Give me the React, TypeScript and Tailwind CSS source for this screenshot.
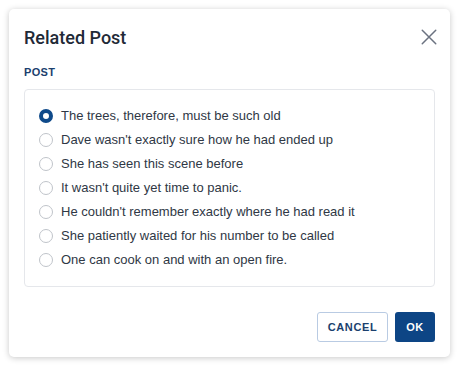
import { useState } from 'react'

const posts = [
  'The trees, therefore, must be such old',
  "Dave wasn't exactly sure how he had ended up",
  'She has seen this scene before',
  "It wasn't quite yet time to panic.",
  "He couldn't remember exactly where he had read it",
  'She patiently waited for his number to be called',
  'One can cook on and with an open fire.',
]

export default function App() {
  const [selected, setSelected] = useState(0)

  return (
    <div className="p-[9px] bg-white" style={{ fontFamily: '"Liberation Sans", Arial, sans-serif' }}>
      <div className="w-[441px] h-[348px] bg-white rounded-[5px] shadow-[0_1px_6px_rgba(0,0,0,0.22)] px-[15px] pt-[17px] pb-[15px] flex flex-col">
        <div className="flex items-center justify-between h-[22px]">
          <h1 className="text-[18px] font-medium text-[#1f2a37]" style={{ fontFamily: 'Roboto, sans-serif' }}>Related Post</h1>
          <button className="w-[18px] h-[18px] text-[#6b7280] mr-[-3px]">
            <svg viewBox="0 0 16 16" width="18" height="18" fill="none" stroke="currentColor" strokeWidth="1.3" strokeLinecap="round">
              <path d="M2 2L14 14M14 2L2 14" />
            </svg>
          </button>
        </div>

        <div className="mt-[17px] text-[11px] font-bold text-[#1b3f6e] tracking-[0.3px] leading-[14px]">POST</div>

        <div className="mt-[10px] border border-[#e5e7eb] rounded-[4px] py-[14px] pl-[14px]">
          {posts.map((p, i) => (
            <label key={p} className="flex items-center h-[24px] cursor-pointer" onClick={() => setSelected(i)}>
              <span
                className={`w-[14px] h-[14px] rounded-full shrink-0 ${selected === i ? 'border-[4px] border-[#0f4a8a]' : 'border border-[#c0c4ca]'}`}
              />
              <span className="ml-[8px] text-[13px] text-[#2f3845]">{p}</span>
            </label>
          ))}
        </div>

        <div className="mt-auto flex justify-end gap-[7px]">
          <button className="w-[71px] h-[30px] rounded-[3px] border border-[#b9cbe3] text-[11px] font-bold tracking-[0.6px] text-[#1b3f6e]">
            CANCEL
          </button>
          <button className="w-[40px] h-[30px] rounded-[3px] bg-[#0d4585] text-[11px] font-bold tracking-[0.6px] text-white">
            OK
          </button>
        </div>
      </div>
    </div>
  )
}
